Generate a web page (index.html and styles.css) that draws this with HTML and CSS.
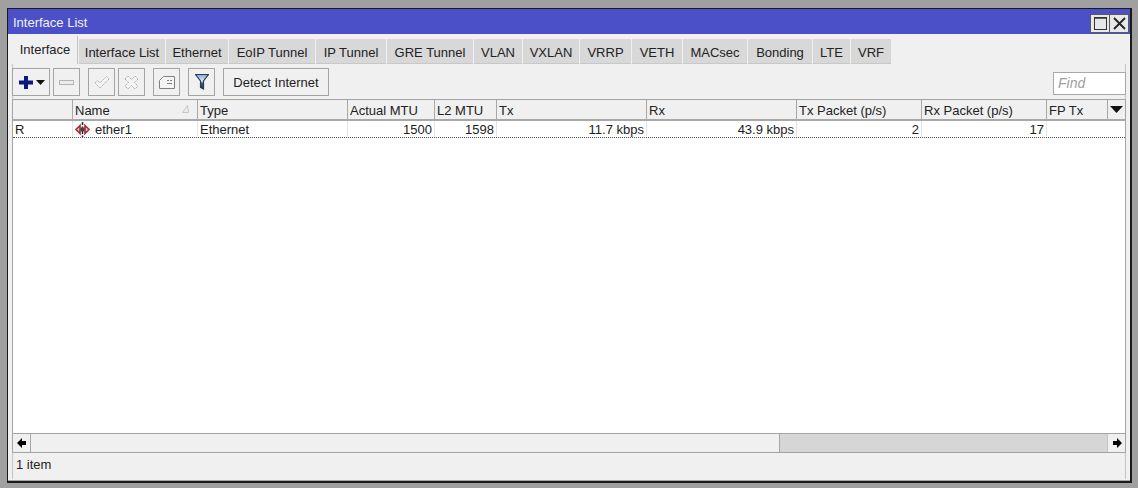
FILE: index.html
```html
<!DOCTYPE html>
<html lang="en">
<head>
<meta charset="utf-8">
<title>Interface List</title>
<link rel="stylesheet" href="styles.css">
</head>
<body>
<div class="window">
  <div class="titlebar">
    <span class="title">Interface List</span>
    <div class="winbtns">
      <button class="winbtn"><svg width="15" height="15" viewBox="0 0 15 15"><rect x="1.500" y="1.500" width="12" height="12" fill="none" stroke="#333"/><path d="M1 2h13" stroke="#333" stroke-width="1.500"/></svg></button>
      <button class="winbtn"><svg width="15" height="15" viewBox="0 0 15 15"><path d="M2 2l11 11M13 2L2 13" stroke="#222" stroke-width="1.800"/></svg></button>
    </div>
  </div>
  <div class="body">
    <div class="tabs">
      <div class="tab active tw-a">Interface</div>
      <div class="tab tw-b">Interface List</div>
      <div class="tab tw-c">Ethernet</div>
      <div class="tab tw-b">EoIP Tunnel</div>
      <div class="tab tw-d">IP Tunnel</div>
      <div class="tab tw-e">GRE Tunnel</div>
      <div class="tab tw-f">VLAN</div>
      <div class="tab tw-g">VXLAN</div>
      <div class="tab tw-h">VRRP</div>
      <div class="tab tw-i">VETH</div>
      <div class="tab tw-j">MACsec</div>
      <div class="tab tw-j">Bonding</div>
      <div class="tab tw-k">LTE</div>
      <div class="tab tw-l">VRF</div>
    </div>
    <div class="panel">
      <div class="toolbar">
        <button class="btn btn-add">
          <svg width="14" height="13" viewBox="0 0 14 13"><path d="M5 0h4v4.500h5v4H9V13H5V8.500H0v-4h5z" fill="#0a1a7c"/></svg>
          <svg width="9" height="5" viewBox="0 0 9 5"><path d="M0 0h9L4.500 5z" fill="#111"/></svg>
        </button>
        <button class="btn btn-icon"><svg width="15" height="5" viewBox="0 0 15 5"><rect x="0.500" y="0.500" width="14" height="4" fill="#ececec" stroke="#b4b4b4"/></svg></button>
        <button class="btn btn-icon gap-m"><svg width="16" height="13" viewBox="0 0 16 13"><path d="M1 7l2.500-2.500L6 7l6.500-6.500L15 3l-9 9z" fill="#f4f4f4" stroke="#b0b0b0" stroke-dasharray="1.500 .7"/></svg></button>
        <button class="btn btn-icon"><svg width="15" height="15" viewBox="0 0 15 15"><path d="M1 4l3-3 3.500 3.500L11 1l3 3-3.500 3.500L14 11l-3 3-3.500-3.500L4 14l-3-3 3.500-3.500z" fill="#f4f4f4" stroke="#aaa" stroke-dasharray="1.500 .8"/></svg></button>
        <button class="btn btn-icon gap-m"><svg width="16" height="13" viewBox="0 0 16 13"><path d="M0.500 12.500V4.500L4.500 0.500H15.500V12.500z" fill="#f4f4f4" stroke="#808080"/><path d="M8 4.500h2M11 4.500h2M8 7.500h5" stroke="#808080"/></svg></button>
        <button class="btn btn-icon gap-m"><svg width="14" height="16" viewBox="0 0 14 16"><defs><linearGradient id="funnel" x1="0" y1="0" x2="0" y2="1"><stop offset="0" stop-color="#7fa6dc"/><stop offset="0.450" stop-color="#e6eef8"/><stop offset="0.600" stop-color="#4c5c74"/><stop offset="1" stop-color="#26303e"/></linearGradient></defs><path d="M0.500 0.500h13L8.500 7v8l-3-1.500V7z" fill="url(#funnel)" stroke="#2a3a52" stroke-width="1.200"/></svg></button>
        <button class="btn btn-text gap-m">Detect Internet</button>
        <input class="find" placeholder="Find" aria-label="Find">
      </div>
      <div class="table">
        <div class="row head">
          <div class="hc"></div>
          <div class="hc name-head">Name<svg class="sort" width="7" height="8" viewBox="0 0 7 8"><path d="M5.500 0.500L0.500 7.500h6z" fill="none" stroke="#c4c4c4"/></svg></div>
          <div class="hc">Type</div>
          <div class="hc">Actual MTU</div>
          <div class="hc">L2 MTU</div>
          <div class="hc">Tx</div>
          <div class="hc">Rx</div>
          <div class="hc">Tx Packet (p/s)</div>
          <div class="hc">Rx Packet (p/s)</div>
          <div class="hc">FP Tx</div>
          <div class="hc menu"><svg width="13" height="7" viewBox="0 0 13 7"><path d="M0 0h13L6.500 7z" fill="#111"/></svg></div>
        </div>
        <div class="row data">
          <div class="dc">R</div>
          <div class="dc name-cell">
            <svg width="15" height="15" viewBox="0 0 15 15"><path d="M5 3.500L1 7.500l4 4zM10 3.500l4 4-4 4z" fill="#f0c4ca" stroke="#a53845" stroke-width="1.700"/><path d="M7.500 0v15" stroke="#222" stroke-width="1.500" stroke-dasharray="3 1.500"/><circle cx="7.500" cy="7.500" r="2.300" fill="#444"/></svg>
            ether1
          </div>
          <div class="dc">Ethernet</div>
          <div class="dc num">1500</div>
          <div class="dc num">1598</div>
          <div class="dc num">11.7 kbps</div>
          <div class="dc num">43.9 kbps</div>
          <div class="dc num">2</div>
          <div class="dc num">17</div>
          <div class="dc"></div>
          <div class="dc"></div>
        </div>
        <div class="spacer"></div>
        <div class="scrollbar">
          <button class="sb-btn"><svg width="10" height="10" viewBox="0 0 10 10"><path d="M0 5l5-5v3h4v4H5v3z" fill="#000"/></svg></button>
          <div class="sb-thumb"></div>
          <div class="sb-track"></div>
          <button class="sb-btn sb-right"><svg width="10" height="10" viewBox="0 0 10 10"><path d="M10 5L5 0v3H1v4h4v3z" fill="#000"/></svg></button>
        </div>
      </div>
      <div class="status">1 item</div>
    </div>
  </div>
</div>
</body>
</html>
```

FILE: styles.css
```css
* { box-sizing: border-box; }
html, body { margin: 0; height: 100%; }
body {
  background: #a0a0a0;
  padding: 8px 6px 5px 7px;
  font-family: "Liberation Sans", Arial, sans-serif;
  font-size: 13px;
  color: #1c1c1c;
  overflow: hidden;
}
button { font: inherit; color: inherit; margin: 0; padding: 0; }
.window {
  height: 475px;
  display: flex;
  flex-direction: column;
  background: #f0f0f0;
  border: 1px solid #1a1a1a;
  border-right-width: 2px;
  border-bottom-width: 2px;
}
.titlebar {
  height: 25px;
  flex: none;
  background: #4c50c8;
  color: #f0f0f0;
  display: flex;
  align-items: center;
  justify-content: space-between;
  padding: 3px 1px 0 5px;
}
.title { position: relative; top: -1px; }
.winbtns { display: flex; }
.winbtn {
  width: 20px;
  height: 19px;
  display: flex;
  align-items: center;
  justify-content: center;
  background: #e8e8e8;
  border: 1px solid #5a5a5a;
}
.winbtn + .winbtn { margin-left: -1px; }
.body {
  flex: 1;
  min-height: 0;
  display: flex;
  flex-direction: column;
  padding: 2px 4px 1px 4px;
  border-bottom: 1px solid #a8a8a8;
}
.tabs { display: flex; height: 28px; flex: none; align-items: flex-end; gap: 1px; }
.tab {
  height: 25px;
  background: #d8d8d8;
  display: flex;
  align-items: center;
  justify-content: center;
  color: #222;
  border-bottom: 1px solid #c8c8c8;
  padding-top: 2px;
}
.tab.active {
  height: 28px;
  background: #f0f0f0;
  border-bottom: 0;
  border-right: 1px solid #c4c4c4;
  padding: 0 0 1px 1px;
}
.tw-a { width: 66px; }
.tw-b { width: 86px; }
.tw-c { width: 62px; }
.tw-d { width: 70px; }
.tw-e { width: 86px; }
.tw-f { width: 48px; }
.tw-g { width: 56px; }
.tw-h { width: 51px; }
.tw-i { width: 50px; }
.tw-j { width: 64px; }
.tw-k { width: 37px; }
.tw-l { width: 40px; }
.panel {
  flex: 1;
  min-height: 0;
  display: flex;
  flex-direction: column;
  border-left: 1px solid #c4c4c4;
  border-right: 1px solid #c4c4c4;
}
.toolbar {
  height: 35px;
  flex: none;
  display: flex;
  align-items: center;
  padding: 1px 0 0 0;
  margin-left: -1px;
  margin-right: -1px;
  gap: 3px;
}
.btn {
  height: 28px;
  background: #f0f0f0;
  border: 1px solid #a4a4a4;
  display: flex;
  align-items: center;
  justify-content: center;
  flex: none;
}
.btn-add { width: 38px; gap: 3px; padding-left: 1px; }
.btn-icon { width: 27px; }
.gap-m { margin-left: 5px; }
.btn-text { width: 106px; color: #222; }
.find {
  margin-left: auto;
  width: 73px;
  height: 23px;
  border: 1px solid #a8a8a8;
  background: #fff;
  padding: 0 4px;
  font: italic 14px "Liberation Sans", Arial, sans-serif;
  margin-top: 2px;
}
.find::placeholder { color: #a0a0a0; opacity: 1; }
.table {
  flex: 1;
  min-height: 0;
  display: flex;
  flex-direction: column;
  background: #fff;
  border: 1px solid #a4a4a4;
  border-bottom: 0;
  margin-left: -1px;
  margin-right: -1px;
}
.row {
  display: grid;
  grid-template-columns: 60px 125px 150px 87px 62px 150px 150px 125px 125px 61px 1fr;
  flex: none;
}
.head { height: 21px; background: #f0f0f0; border-bottom: 2px solid #a8a8a8; }
.hc {
  border-right: 1px solid #a8a8a8;
  padding: 2px 0 0 2px;
  line-height: 17px;
  white-space: nowrap;
  color: #222;
}
.hc:last-child { border-right: 0; }
.name-head { position: relative; }
.sort { position: absolute; right: 8px; top: 5px; }
.menu { display: flex; align-items: center; justify-content: center; padding: 0; }
.data { height: 17px; border-bottom: 1px dotted #555; background: #fff; }
.dc {
  border-right: 1px solid #e4e4e4;
  line-height: 16px;
  padding: 1px 2px 0;
  white-space: nowrap;
  overflow: hidden;
}
.dc:last-child, .dc:nth-last-child(2) { border-right: 0; }
.num { text-align: right; }
.name-cell { display: flex; align-items: center; gap: 5px; padding-left: 2px; }
.spacer { flex: 1; }
.scrollbar {
  height: 20px;
  flex: none;
  display: flex;
  background: #d6d6d6;
  border-top: 1px solid #a4a4a4;
  border-bottom: 1px solid #a4a4a4;
}
.sb-btn {
  width: 18px;
  height: 18px;
  background: #f0f0f0;
  border: 0;
  border-right: 1px solid #a8a8a8;
  display: flex;
  align-items: center;
  justify-content: center;
}
.sb-right { border-right: 0; border-left: 1px solid #c4c4c4; }
.sb-thumb { width: 749px; background: #f0f0f0; border-right: 1px solid #a8a8a8; }
.sb-track { flex: 1; }
.status {
  height: 26px;
  flex: none;
  display: flex;
  align-items: center;
  padding: 0 0 3px 3px;
  color: #222;
}
```
